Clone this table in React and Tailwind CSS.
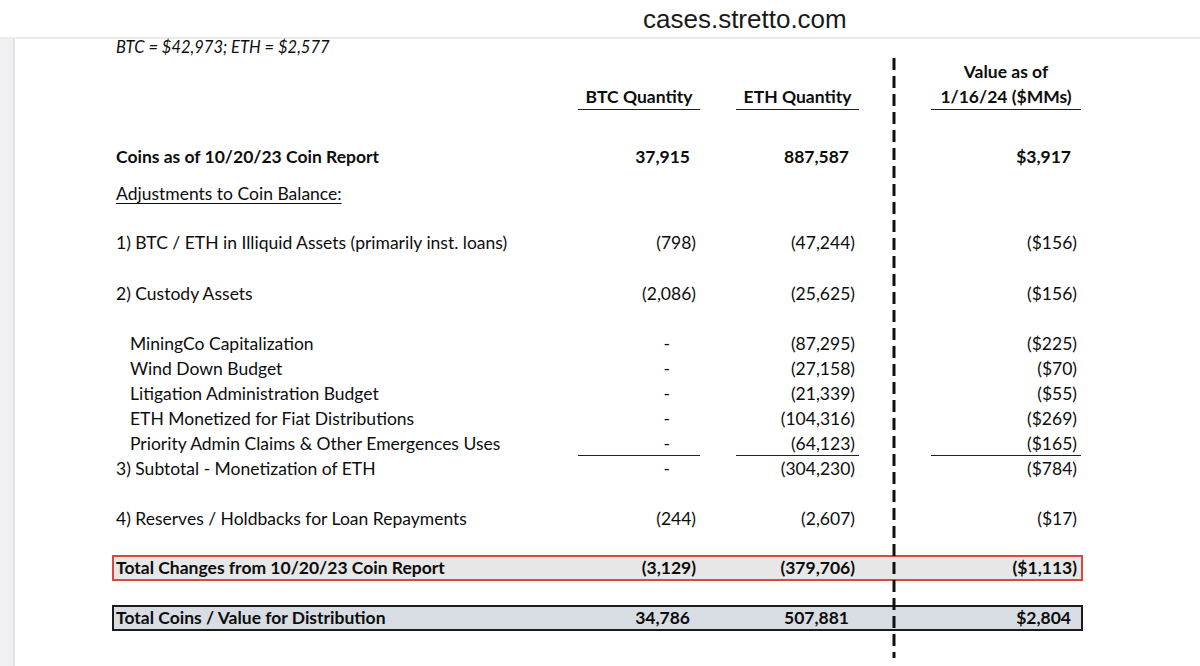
import React from 'react';

const rows = [
  { label: 'MiningCo Capitalization', btc: '-', eth: '(87,295)', val: '($225)' },
  { label: 'Wind Down Budget', btc: '-', eth: '(27,158)', val: '($70)' },
  { label: 'Litigation Administration Budget', btc: '-', eth: '(21,339)', val: '($55)' },
  { label: 'ETH Monetized for Fiat Distributions', btc: '-', eth: '(104,316)', val: '($269)' },
];

// accounting style: negatives hang a little further right than positives
const pad = (v) => {
  if (v === '-') return 'pr-[30px]';
  if (v.endsWith(')')) return 'pr-[4px]';
  return 'pr-[10px]';
};

const Cells = ({ btc, eth, val, line }) => (
  <>
    <div className={`w-[122px] text-right ${pad(btc)} ${line ? 'border-b-[1.5px] border-[#222]' : ''}`}>{btc}</div>
    <div className="w-[36px]" />
    <div className={`w-[123px] text-right ${pad(eth)} ${line ? 'border-b-[1.5px] border-[#222]' : ''}`}>{eth}</div>
    <div className="w-[72px]" />
    <div className={`w-[150px] text-right ${pad(val)} ${line ? 'border-b-[1.5px] border-[#222]' : ''}`}>{val}</div>
  </>
);

const Row = ({ label, sub, className = '', ...nums }) => (
  <div className={`flex w-[971px] h-[25px] leading-[25px] ${className}`}>
    <div className={`w-[466px] whitespace-nowrap ${sub ? 'pl-[18px]' : 'pl-[4px]'}`}>{label}</div>
    <Cells {...nums} />
  </div>
);

export default function App() {
  return (
    <div className="w-[1200px] h-[666px] bg-white overflow-hidden text-[#0d0d0d] font-[Lato,sans-serif]">
      {/* browser address strip */}
      <div className="h-[39px] border-b-2 border-[#ebebed] flex items-center pl-[643px]">
        <span className="font-['Liberation_Sans',Arial,sans-serif] text-[26px] leading-[30px] text-[#1a1a1a]">cases.stretto.com</span>
      </div>

      <div className="flex h-[627px]">
        <div className="w-[15px] bg-[#f0f0f2] border-r-2 border-[#e2e2e6]" />

        <div className="relative flex-1 pl-[97px] text-[17.5px]">
          <div className="h-[16px] leading-[16px] pl-[4px] italic text-[16.5px]">BTC = $42,973; ETH = $2,577</div>

          {/* column headers */}
          <div className="flex w-[971px] mt-[4px] font-bold">
            <div className="w-[466px]" />
            <div className="w-[122px] flex flex-col justify-end">
              <div className="leading-[25px] text-center border-b-[1.5px] border-[#222]">BTC Quantity</div>
            </div>
            <div className="w-[36px]" />
            <div className="w-[123px] flex flex-col justify-end">
              <div className="leading-[25px] text-center border-b-[1.5px] border-[#222]">ETH Quantity</div>
            </div>
            <div className="w-[72px]" />
            <div className="w-[150px] text-center">
              <div className="leading-[25px]">Value as of</div>
              <div className="leading-[25px] border-b-[1.5px] border-[#222]">1/16/24 ($MMs)</div>
            </div>
          </div>

          <Row className="mt-[34px] font-bold" label="Coins as of 10/20/23 Coin Report" btc="37,915" eth="887,587" val="$3,917" />
          <div className="mt-[12px] h-[25px] leading-[25px] pl-[4px]">
            <span className="underline underline-offset-[3px] decoration-1">Adjustments to Coin Balance:</span>
          </div>
          <Row className="mt-[24px]" label="1) BTC / ETH in Illiquid Assets (primarily inst. loans)" btc="(798)" eth="(47,244)" val="($156)" />
          <Row className="mt-[26px]" label="2) Custody Assets" btc="(2,086)" eth="(25,625)" val="($156)" />

          <div className="mt-[25px]">
            {rows.map((r) => (
              <Row key={r.label} sub {...r} />
            ))}
            <Row sub line label="Priority Admin Claims & Other Emergences Uses" btc="-" eth="(64,123)" val="($165)" />
            <Row label="3) Subtotal - Monetization of ETH" btc="-" eth="(304,230)" val="($784)" />
          </div>

          <Row className="mt-[25px]" label="4) Reserves / Holdbacks for Loan Repayments" btc="(244)" eth="(2,607)" val="($17)" />

          <Row
            className="mt-[24px] !h-[26px] font-bold bg-[#e7e7e7] ring-2 ring-inset ring-[#d9483f]"
            label="Total Changes from 10/20/23 Coin Report"
            btc="(3,129)"
            eth="(379,706)"
            val="($1,113)"
          />
          <Row
            className="mt-[24px] !h-[26px] font-bold bg-[#d8dde4] ring-2 ring-inset ring-[#1c1c1c]"
            label="Total Coins / Value for Distribution"
            btc="34,786"
            eth="507,881"
            val="$2,804"
          />

          {/* dashed divider drawn over the table */}
          <svg className="absolute left-[877px] top-[19px]" width="4" height="600">
            <line x1="2" y1="0" x2="2" y2="600" stroke="#111" strokeWidth="3" strokeDasharray="12 6" />
          </svg>
        </div>
      </div>
    </div>
  );
}
